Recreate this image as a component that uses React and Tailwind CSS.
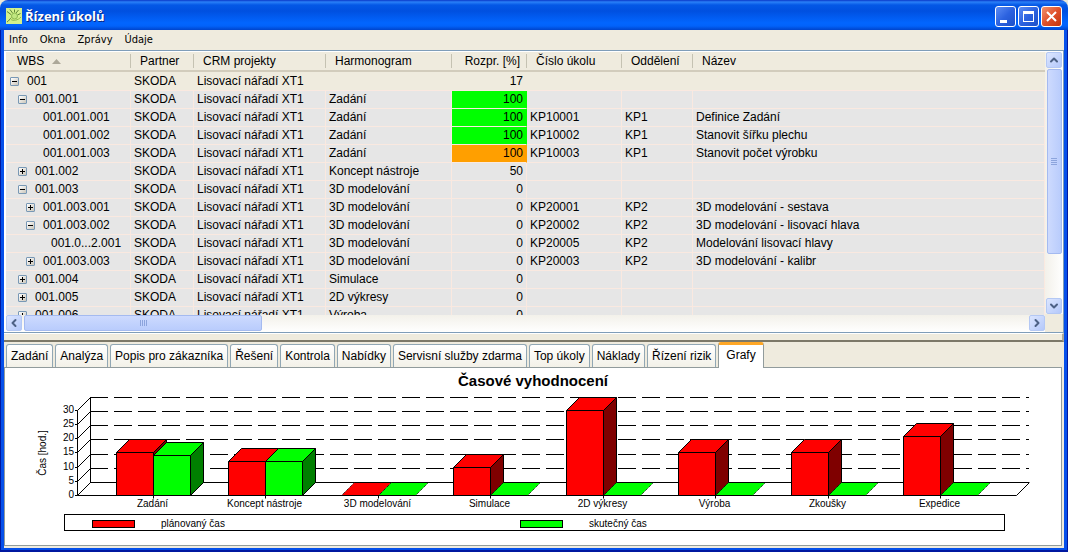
import React, { useState } from 'react';
import { ChevronUp, ChevronDown, ChevronLeft, ChevronRight } from 'lucide-react';

const columns = [
  { label: 'Partner', width: 'w-[63px]' },
  { label: 'CRM projekty', width: 'w-[132px]' },
  { label: 'Harmonogram', width: 'w-[126px]' },
  { label: 'Rozpr. [%]', width: 'w-[75px]', right: true },
  { label: 'Číslo úkolu', width: 'w-[95px]' },
  { label: 'Oddělení', width: 'w-[71px]' },
  { label: 'Název', width: '' },
];

const rows = [
  { wbs: '001', level: 0, open: true, plan: '', done: 17 },
  { wbs: '001.001', level: 1, open: true, plan: 'Zadání', done: 100, mark: 'green' },
  { wbs: '001.001.001', level: 2, plan: 'Zadání', done: 100, mark: 'green', id: 'KP10001', dept: 'KP1', name: 'Definice Zadání' },
  { wbs: '001.001.002', level: 2, plan: 'Zadání', done: 100, mark: 'green', id: 'KP10002', dept: 'KP1', name: 'Stanovit šířku plechu' },
  { wbs: '001.001.003', level: 2, plan: 'Zadání', done: 100, mark: 'orange', id: 'KP10003', dept: 'KP1', name: 'Stanovit počet výrobku' },
  { wbs: '001.002', level: 1, open: false, plan: 'Koncept nástroje', done: 50 },
  { wbs: '001.003', level: 1, open: true, plan: '3D modelování', done: 0 },
  { wbs: '001.003.001', level: 2, open: false, plan: '3D modelování', done: 0, id: 'KP20001', dept: 'KP2', name: '3D modelování - sestava' },
  { wbs: '001.003.002', level: 2, open: true, plan: '3D modelování', done: 0, id: 'KP20002', dept: 'KP2', name: '3D modelování - lisovací hlava' },
  { wbs: '001.0...2.001', level: 3, plan: '3D modelování', done: 0, id: 'KP20005', dept: 'KP2', name: 'Modelování lisovací hlavy' },
  { wbs: '001.003.003', level: 2, open: false, plan: '3D modelování', done: 0, id: 'KP20003', dept: 'KP2', name: '3D modelování - kalibr' },
  { wbs: '001.004', level: 1, open: false, plan: 'Simulace', done: 0 },
  { wbs: '001.005', level: 1, open: false, plan: '2D výkresy', done: 0 },
  { wbs: '001.006', level: 1, open: false, plan: 'Výroba', done: 0 },
];

const tabs = [
  'Zadání', 'Analýza', 'Popis pro zákazníka', 'Řešení', 'Kontrola', 'Nabídky',
  'Servisní služby zdarma', 'Top úkoly', 'Náklady', 'Řízení rizik', 'Grafy',
];

const marks = {
  green: 'bg-[#00ff00] border-r-[#00ff00]',
  orange: 'bg-[#ff9f00] border-r-[#ff9f00]',
};

const TitleButton = ({ label, close, children }) => (
  <button
    aria-label={label}
    className={`flex h-[21px] w-[21px] items-center justify-center rounded-[3px] border border-white ${
      close
        ? 'bg-linear-to-br from-[#f0906c] via-[#e0502a] to-[#c43408]'
        : 'bg-linear-to-br from-[#5c8cf4] via-[#2c62e0] to-[#1c50c8]'
    }`}
  >
    <svg width="19" height="19" viewBox="0 0 19 19" fill="none" stroke="#fff" shapeRendering={close ? 'auto' : 'crispEdges'}>
      {children}
    </svg>
  </button>
);

const TitleBar = () => (
  <header className="flex h-[30px] shrink-0 items-center justify-between rounded-t-lg bg-[linear-gradient(#0a38c8_0px,#2a80f8_2px,#0458e6_5px,#0050e0_11px,#0266ff_23px,#0262fa_26px,#0044cc_30px)] pt-[2px] pr-[6px] pl-[6px]">
    <div className="flex items-center gap-[3px]">
      <svg width="16" height="16" viewBox="0 0 16 16" aria-hidden="true">
        <rect width="16" height="16" fill="#d2f08c" />
        <g stroke="#5c8438" fill="none">
          <path d="M1 14C3 13 3.500 11 5.500 9.500M1 3.500L5 6.500M4 1.500L6.500 5M8.500 1.500V4.500M12.500 2L10 5M14.500 5.500L11.500 7" />
          <circle cx="8.500" cy="8" r="3" fill="#c0e680" stroke="#8cb850" />
          <path d="M5 11.500C7 13 12 12.500 15 9" stroke="#8cb850" />
        </g>
      </svg>
      <h1 className="font-['Open_Sans',sans-serif] text-[13px] leading-4 font-bold text-white [text-shadow:1px_1px_#0a2a88]">Řízení úkolů</h1>
    </div>
    <div className="flex gap-[2px]">
      <TitleButton label="Minimalizovat">
        <path d="M4 14h7" strokeWidth="3" />
      </TitleButton>
      <TitleButton label="Maximalizovat">
        <rect x="4.500" y="4.500" width="10" height="10" />
        <path d="M4 5.500h11" strokeWidth="2" />
      </TitleButton>
      <TitleButton label="Zavřít" close>
        <path d="M5 5l9 9M14 5l-9 9" strokeWidth="2" />
      </TitleButton>
    </div>
  </header>
);

const MenuBar = () => (
  <nav className="flex h-5 shrink-0 items-center gap-[12px] bg-[#efebde] pl-[5px] font-['DejaVu_Sans_Condensed','DejaVu_Sans',sans-serif] text-[11px] leading-4">
    {['Info', 'Okna', 'Zprávy', 'Údaje'].map(item => (
      <button key={item}>{item}</button>
    ))}
  </nav>
);

const Toggle = ({ open, onClick }) => (
  <button
    onClick={onClick}
    aria-label={open ? 'Sbalit' : 'Rozbalit'}
    className="h-[9px] w-[9px] shrink-0 rounded-[1px] border border-[#7898b5] bg-linear-to-br from-white to-[#cbc6ba]"
  >
    <svg width="7" height="7" viewBox="0 0 7 7" stroke="#000" shapeRendering="crispEdges">
      <path d={open ? 'M1 3.500h5' : 'M1 3.500h5M3.500 1v5'} />
    </svg>
  </button>
);

const ScrollButton = ({ label, icon: Icon }) => (
  <button
    aria-label={label}
    className="flex h-4 w-4 shrink-0 items-center justify-center rounded-[2px] border border-[#b4c8f4] bg-linear-to-br from-[#dce6ff] to-[#b4c8fa] text-[#4d6185]"
  >
    <Icon size={12} strokeWidth={4} />
  </button>
);

const TaskTable = () => {
  const [tree, setTree] = useState(rows);

  const handleToggle = (wbs) => {
    setTree(prev => prev.map(row => (row.wbs === wbs ? { ...row, open: !row.open } : row)));
  };

  return (
    <table className="w-full table-fixed border-separate border-spacing-0 whitespace-nowrap">
      <thead>
        <tr className="h-5 bg-[#efebde] text-left">
          <th className="w-[125px] border-b-2 border-[#d2ccbc] p-0 font-normal">
            <div className="flex items-center gap-2 border-r border-[#c5c2b2] pl-[11px] leading-[14px]">
              WBS
              <svg width="9" height="5" viewBox="0 0 9 5" fill="#aca899" aria-hidden="true">
                <path d="M4.500 0L9 5H0z" />
              </svg>
            </div>
          </th>
          {columns.map((col, i) => (
            <th key={col.label} className={`border-b-2 border-[#d2ccbc] p-0 font-normal ${col.width}`}>
              <div
                className={`leading-[14px] ${col.right ? 'pr-[6px] text-right' : 'pl-[9px]'} ${
                  i < columns.length - 1 ? 'border-r border-[#c5c2b2]' : ''
                }`}
              >
                {col.label}
              </div>
            </th>
          ))}
        </tr>
      </thead>
      <tbody>
        {tree.map(row => {
          const top = row.level === 0;
          const cell = `border-b border-b-[#fae9e0] p-0 pl-[3px] leading-[17px] ${
            top ? 'bg-[#efebde]' : 'border-r border-r-[#fae9e0] bg-[#e6e6e6]'
          }`;
          return (
            <tr key={row.wbs} className={top ? 'h-[19px]' : 'h-[18px]'}>
              <td className={cell}>
                <div className="flex items-center gap-2" style={{ paddingLeft: 1 + row.level * 8 }}>
                  {row.open === undefined ? (
                    <span className="w-[9px]" />
                  ) : (
                    <Toggle open={row.open} onClick={() => handleToggle(row.wbs)} />
                  )}
                  {row.wbs}
                </div>
              </td>
              <td className={cell}>SKODA</td>
              <td className={cell}>Lisovací nářadí XT1</td>
              <td className={cell}>{row.plan}</td>
              <td
                className={
                  row.mark
                    ? `border-r border-b border-b-[#fae9e0] p-0 pr-[3px] text-right leading-[17px] ${marks[row.mark]}`
                    : `${cell} ${top ? 'pr-1' : 'pr-[3px]'} text-right`
                }
              >
                {row.done}
              </td>
              <td className={cell}>{row.id}</td>
              <td className={cell}>{row.dept}</td>
              <td className={cell}>{row.name}</td>
            </tr>
          );
        })}
      </tbody>
    </table>
  );
};

const TaskPane = () => (
  <section className="flex min-h-0 flex-1 border-t border-r border-b border-[#7f9db9] bg-white pt-px pl-[2px]">
    <div className="flex min-w-0 flex-1 flex-col">
      <div className="min-h-0 flex-1 overflow-hidden">
        <TaskTable />
      </div>
      <div className="flex h-[17px] shrink-0 gap-[2px] bg-linear-to-b from-[#f3f1ea] to-white">
        <ScrollButton label="Posunout vlevo" icon={ChevronLeft} />
        <div className="flex h-4 w-[238px] items-center justify-center gap-px rounded-[2px] border border-[#a4baf0] bg-linear-to-b from-[#cddafe] to-[#b9ccfc]">
          {[0, 1, 2, 3].map(i => (
            <span key={i} className="h-[6px] w-px bg-[#8ca4dc]" />
          ))}
        </div>
        <div className="flex-1" />
        <ScrollButton label="Posunout vpravo" icon={ChevronRight} />
      </div>
    </div>
    <div className="flex w-[18px] shrink-0 flex-col bg-[#efebde]">
      <div className="flex min-h-0 flex-1 flex-col items-center gap-px bg-linear-to-r from-[#f3f1ea] to-white">
        <ScrollButton label="Posunout nahoru" icon={ChevronUp} />
        <div className="flex h-[185px] w-[15px] flex-col items-center justify-center gap-px rounded-[2px] border border-[#a4baf0] bg-linear-to-r from-[#cddafe] to-[#b9ccfc]">
          {[0, 1, 2, 3].map(i => (
            <span key={i} className="h-px w-[6px] bg-[#8ca4dc]" />
          ))}
        </div>
        <div className="flex-1" />
        <ScrollButton label="Posunout dolů" icon={ChevronDown} />
      </div>
      <div className="h-[18px]" />
    </div>
  </section>
);

const TabBar = ({ active, onSelect }) => (
  <div role="tablist" className="flex h-[25px] shrink-0 items-end bg-[#efebde] pl-[2px]">
    {tabs.map(tab =>
      tab === active ? (
        <button
          key={tab}
          role="tab"
          aria-selected="true"
          className="z-10 -mb-px h-[26px] rounded-t-[3px] border-x border-t-3 border-x-[#919b9c] border-t-[#ffa726] bg-white px-[7px] pb-[4px] leading-4"
        >
          {tab}
        </button>
      ) : (
        <button
          key={tab}
          role="tab"
          aria-selected="false"
          onClick={() => onSelect(tab)}
          className="mr-[2px] h-[23px] rounded-t-[3px] border border-b-0 border-[#91a7b4] bg-linear-to-b from-white to-[#f3f1e8] px-1 leading-4"
        >
          {tab}
        </button>
      )
    )}
  </div>
);

// values are hours: planned, actual
const chartData = [
  { label: 'Zadání', x: 116.5, plan: 15, real: 14 },
  { label: 'Koncept nástroje', x: 228.5, plan: 12, real: 12 },
  { label: '3D modelování', x: 341.5, plan: 0, real: 0 },
  { label: 'Simulace', x: 453.5, plan: 10, real: 0 },
  { label: '2D výkresy', x: 566.5, plan: 30, real: 0 },
  { label: 'Výroba', x: 678.5, plan: 15, real: 0 },
  { label: 'Zkoušky', x: 791.5, plan: 15, real: 0 },
  { label: 'Expedice', x: 903.5, plan: 20.8, real: 0 },
];

const BASE = 495.5;
const DEPTH = 13;
const BAR = 37;
const yOf = (value) => Math.round(BASE - 0.5 - value * 2.834) + 0.5;

const Bar = ({ x, value, front, side }) => {
  const y = yOf(value);
  const r = x + BAR;
  if (value === 0) {
    return (
      <g>
        <path d={`M${x} ${BASE}l${DEPTH} ${-DEPTH}h${BAR}l${-DEPTH} ${DEPTH}z`} fill={front} />
        <path d={`M${x} ${BASE}h${BAR}M${x + DEPTH} ${BASE - DEPTH}h${BAR}`} stroke="#000" />
        <path d={`M${x} ${BASE}l${DEPTH} ${-DEPTH}M${r} ${BASE}l${DEPTH} ${-DEPTH}`} stroke="#000" strokeDasharray="1 1" />
      </g>
    );
  }
  return (
    <g stroke="#000" strokeLinejoin="round">
      <path d={`M${r} ${BASE}V${y}l${DEPTH} ${-DEPTH}V${BASE - DEPTH}z`} fill={side} />
      <path d={`M${x} ${y}l${DEPTH} ${-DEPTH}h${BAR}l${-DEPTH} ${DEPTH}z`} fill={front} />
      <path d={`M${x} ${BASE}V${y}H${r}V${BASE}z`} fill={front} />
    </g>
  );
};

const TimeChart = () => {
  const ticks = [0, 5, 10, 15, 20, 25, 30];
  return (
    <svg
      viewBox="5 368 1056 177"
      className="block w-full font-['Liberation_Sans',Arial,sans-serif] text-[10px]"
      role="img"
      aria-label="Časové vyhodnocení"
    >
      <text x="533" y="386" textAnchor="middle" className="text-[15px] font-bold">Časové vyhodnocení</text>
      <g stroke="#000" fill="none">
        {ticks.map(t => {
          const y = yOf(t);
          return (
            <g key={t}>
              <path d={`M75 ${y}h2.500l${DEPTH} ${-DEPTH}`} />
              <path d={`M90 ${y - DEPTH}H1029`} strokeDasharray={t === 0 ? 'none' : '18 6'} />
            </g>
          );
        })}
        <path d={`M77.500 410.500V${BASE}H1016.500l${DEPTH} ${-DEPTH}M90.500 397.500V482.500`} />
      </g>
      {ticks.map(t => (
        <text key={t} x="74" y={yOf(t) + 2.5} textAnchor="end">{t}</text>
      ))}
      <text textAnchor="middle" transform="translate(46 453) rotate(-90)">Čas [hod.]</text>
      {chartData.map(d => (
        <g key={d.label}>
          <Bar x={d.x} value={d.plan} front="#ff0000" side="#7f0000" />
          <Bar x={d.x + BAR} value={d.real} front="#00ff00" side="#007f00" />
          <path d={`M${d.x + BAR} ${BASE}v3`} stroke="#000" />
          <text x={d.x + BAR - 1} y="507" textAnchor="middle">{d.label}</text>
        </g>
      ))}
      <g stroke="#000">
        <rect x="64.500" y="514.500" width="940" height="16" fill="none" />
        <rect x="92.500" y="520.500" width="42" height="7" fill="#ff0000" />
        <rect x="520.500" y="520.500" width="42" height="7" fill="#00ff00" />
      </g>
      <text x="161" y="527">plánovaný čas</text>
      <text x="589" y="527">skutečný čas</text>
    </svg>
  );
};

const App = () => {
  const [active, setActive] = useState('Grafy');

  return (
    <div className="flex h-screen flex-col bg-[#ece9d8] font-['Liberation_Sans',Arial,sans-serif] text-xs text-black">
      <TitleBar />
      <div className="flex min-h-0 flex-1 flex-col border-x border-b-2 border-[#0018a0] bg-[#0650ea] px-[3px] pb-[2px]">
        <MenuBar />
        <TaskPane />
        <div className="h-[9px] shrink-0 cursor-row-resize border-t border-r-2 border-b-2 border-t-white border-r-[#aca899] border-b-[#7c7868] bg-[#efebde]" />
        <TabBar active={active} onSelect={setActive} />
        <div className="shrink-0 bg-[#efebde] pr-[2px] pb-[2px]">
          <div role="tabpanel" className="border border-[#919b9c] bg-white">
            {active === 'Grafy' ? <TimeChart /> : <div className="h-44" />}
          </div>
        </div>
      </div>
    </div>
  );
};

export default App;
